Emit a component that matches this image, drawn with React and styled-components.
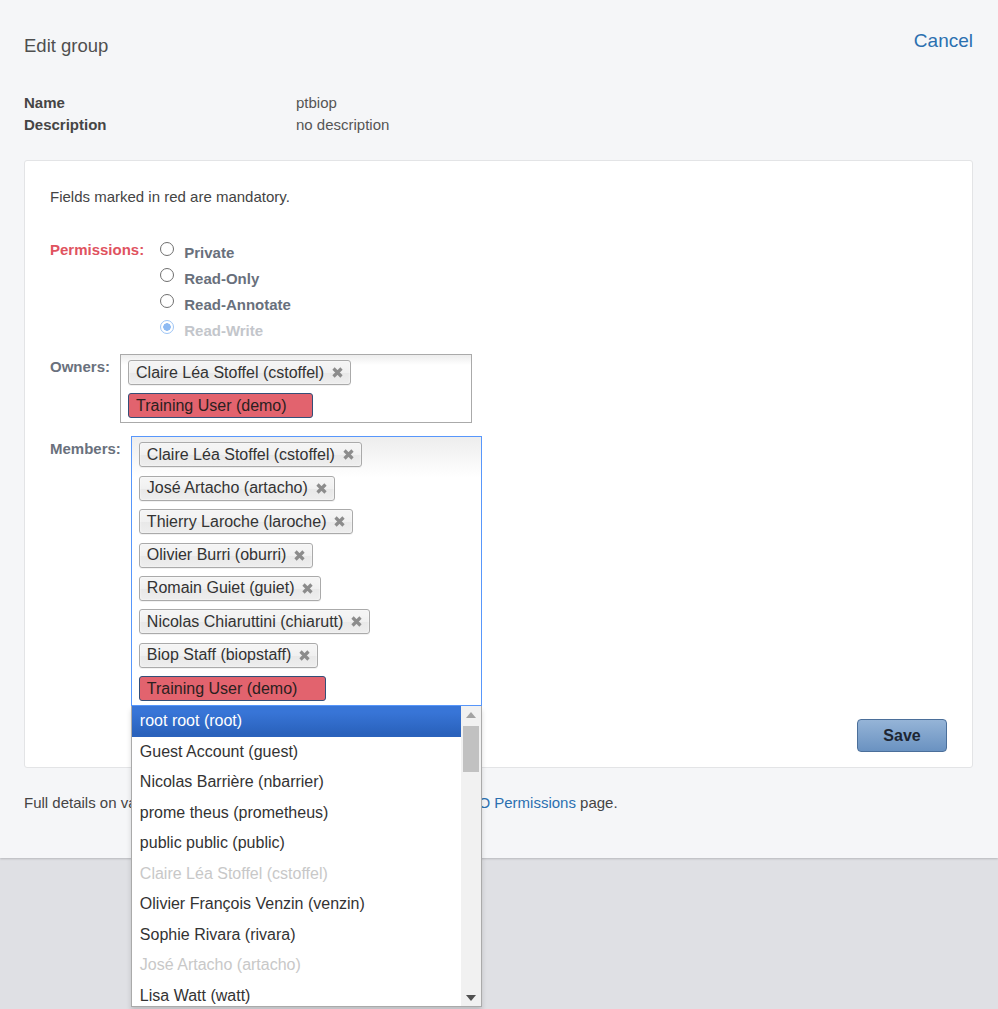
import React from "react";
import styled, { createGlobalStyle } from "styled-components";

const GlobalStyle = createGlobalStyle`
  html, body {
    margin: 0;
    padding: 0;
    background: #dfe0e4;
    font-family: "Liberation Sans", Arial, sans-serif;
    color: #333;
  }
`;

const Page = styled.div`
  min-height: 100vh;
  background: #dfe0e4;
`;

const Top = styled.div`
  background: #f5f6f8;
  padding: 29px 25px 45px 24px;
  box-shadow: 0 1px 2px rgba(0, 0, 0, 0.18);
`;

const Header = styled.div`
  display: flex;
  justify-content: space-between;
  align-items: flex-start;
`;

const Title = styled.h1`
  margin: 0;
  padding-top: 5px;
  font-size: 18.5px;
  line-height: 24px;
  font-weight: normal;
  color: #4f4f4f;
`;

const CancelLink = styled.a`
  font-size: 19px;
  line-height: 24px;
  color: #2b70b0;
  text-decoration: none;
  cursor: pointer;
`;

const Info = styled.dl`
  display: grid;
  grid-template-columns: 272px 1fr;
  margin: 34px 0 0;
  font-size: 15px;
  line-height: 22px;
`;

const InfoKey = styled.dt`
  font-weight: bold;
  color: #454545;
`;

const InfoValue = styled.dd`
  margin: 0;
  color: #555;
`;

const Card = styled.div`
  margin-top: 24px;
  background: #fff;
  border: 1px solid #e3e4e6;
  border-radius: 3px;
  padding: 26px 25px 15px 25px;
  display: flex;
  flex-direction: column;
`;

const Note = styled.p`
  margin: 0;
  font-size: 15px;
  line-height: 20px;
  color: #444;
`;

const FieldRow = styled.div`
  display: flex;
  align-items: flex-start;
  gap: 10px;
  margin-top: ${({ $top }) => $top}px;
`;

const FieldLabel = styled.label`
  font-size: 15px;
  line-height: 20px;
  font-weight: bold;
  color: ${({ $required }) => ($required ? "#e0535f" : "#6a717d")};
  padding-top: ${({ $pad }) => $pad || 0}px;
`;

const RadioList = styled.div`
  display: flex;
  flex-direction: column;
`;

const RadioOption = styled.label`
  display: flex;
  align-items: center;
  height: 26px;
  &:first-child { margin-top: -1px; }
  font-size: 15px;
  font-weight: bold;
  color: ${({ $disabled }) => ($disabled ? "#c3c6cb" : "#69707c")};
`;

const Radio = styled.input.attrs({ type: "radio" })`
  appearance: none;
  margin: -6px 10px 0 6px;
  width: 14px;
  height: 14px;
  border-radius: 50%;
  border: 1px solid #6f6f6f;
  background: #fff;
  box-sizing: border-box;
  &:checked {
    border-color: #9ec5f5;
    background: radial-gradient(circle, #8dbaf3 0 3.5px, #fff 4px);
  }
`;

const ChoiceBox = styled.div`
  position: relative;
  box-sizing: border-box;
  width: ${({ $w }) => $w}px;
  border: 1px solid ${({ $focus }) => ($focus ? "#5897fb" : "#aaa")};
  background: linear-gradient(to bottom, #eee 1%, #fff 15%);
  padding: 5px 7px 4px 7px;
  display: flex;
  flex-wrap: wrap;
  row-gap: 8.4px;
  column-gap: 5px;
`;

const Tag = styled.div`
  box-sizing: border-box;
  height: 25px;
  display: inline-flex;
  align-items: center;
  gap: 7px;
  padding: 0 6px 0 7px;
  border: 1px solid #aaa;
  border-radius: 3px;
  background: linear-gradient(to bottom, #f4f4f4 20%, #f0f0f0 50%, #e8e8e8 52%, #eee 100%);
  box-shadow: 0 0 2px #fff inset, 0 1px 0 rgba(0, 0, 0, 0.05);
  font-size: 16px;
  color: #333;
  white-space: nowrap;
`;

const SearchField = styled.div`
  box-sizing: border-box;
  height: 25px;
  width: ${({ $w }) => $w}px;
  display: flex;
  align-items: center;
  padding: 0 7px;
  border: 1px solid #334f78;
  border-radius: 3px;
  background: #e2636e;
  font-size: 16px;
  color: #2a2020;
  white-space: nowrap;
`;

const Close = () => (
  <svg width="13" height="13" viewBox="0 0 13 13">
    <path d="M2.5 2.5 L10.5 10.5 M10.5 2.5 L2.5 10.5" stroke="#8c8c8c" strokeWidth="3.2" strokeLinecap="butt" />
  </svg>
);

const Dropdown = styled.div`
  position: absolute;
  top: calc(100% + 1px);
  left: -1px;
  right: -1px;
  display: flex;
  background: #fff;
  border: 1px solid #aaa;
  border-top: 0;
  box-shadow: 0 4px 5px rgba(0, 0, 0, 0.15);
  z-index: 10;
`;

const Results = styled.ul`
  flex: 1;
  list-style: none;
  margin: 0;
  padding: 0;
  height: 300px;
  overflow: hidden;
`;

const Result = styled.li`
  padding: 5px 8px;
  line-height: 20.5px;
  font-size: 16px;
  white-space: nowrap;
  color: ${({ $active, $disabled }) => ($active ? "#fff" : $disabled ? "#c8c8c8" : "#333")};
  background: ${({ $active }) =>
    $active ? "linear-gradient(to bottom, #3875d7 20%, #2a62bc 90%)" : "transparent"};
`;

const ScrollTrack = styled.div`
  width: 20px;
  background: #f1f1f1;
  display: flex;
  flex-direction: column;
  align-items: center;
`;

const ScrollButton = styled.div`
  height: 17px;
  display: flex;
  align-items: center;
  justify-content: center;
`;

const Thumb = styled.div`
  margin-top: 3px;
  width: 16px;
  height: 46px;
  background: #c1c1c1;
`;

const Spacer = styled.div`
  flex: 1;
`;

const Arrow = ({ down, color }) => (
  <svg width="10" height="6" viewBox="0 0 10 6">
    <path d={down ? "M0 0 H10 L5 6 Z" : "M0 6 H10 L5 0 Z"} fill={color} />
  </svg>
);

const SaveRow = styled.div`
  display: flex;
  justify-content: flex-end;
  margin-top: 13px;
`;

const SaveButton = styled.button`
  width: 90px;
  height: 33px;
  border: 1px solid #4b6f9a;
  border-radius: 4px;
  background: linear-gradient(to bottom, #95b4d7, #6a92c1);
  font-family: "Liberation Sans", Arial, sans-serif;
  font-size: 16px;
  font-weight: bold;
  color: #1d2633;
  cursor: pointer;
`;

const Footer = styled.p`
  margin: 25px 0 0;
  font-size: 15px;
  line-height: 20px;
  color: #444;
`;

const FooterLink = styled.a`
  color: #2b70b0;
  text-decoration: none;
`;

const permissions = [
  { label: "Private" },
  { label: "Read-Only" },
  { label: "Read-Annotate" },
  { label: "Read-Write", checked: true, disabled: true },
];

const owners = ["Claire Léa Stoffel (cstoffel)"];

const members = [
  "Claire Léa Stoffel (cstoffel)",
  "José Artacho (artacho)",
  "Thierry Laroche (laroche)",
  "Olivier Burri (oburri)",
  "Romain Guiet (guiet)",
  "Nicolas Chiaruttini (chiarutt)",
  "Biop Staff (biopstaff)",
];

const results = [
  { name: "root root (root)", active: true },
  { name: "Guest Account (guest)" },
  { name: "Nicolas Barrière (nbarrier)" },
  { name: "prome theus (prometheus)" },
  { name: "public public (public)" },
  { name: "Claire Léa Stoffel (cstoffel)", disabled: true },
  { name: "Olivier François Venzin (venzin)" },
  { name: "Sophie Rivara (rivara)" },
  { name: "José Artacho (artacho)", disabled: true },
  { name: "Lisa Watt (watt)" },
];

export default function App() {
  return (
    <Page>
      <GlobalStyle />
      <Top>
        <Header>
          <Title>Edit group</Title>
          <CancelLink>Cancel</CancelLink>
        </Header>

        <Info>
          <InfoKey>Name</InfoKey>
          <InfoValue>ptbiop</InfoValue>
          <InfoKey>Description</InfoKey>
          <InfoValue>no description</InfoValue>
        </Info>

        <Card>
          <Note>Fields marked in red are mandatory.</Note>

          <FieldRow $top={33}>
            <FieldLabel $required>Permissions:</FieldLabel>
            <RadioList>
              {permissions.map((p) => (
                <RadioOption key={p.label} $disabled={p.disabled}>
                  <Radio name="perm" defaultChecked={p.checked} disabled={p.disabled} />
                  {p.label}
                </RadioOption>
              ))}
            </RadioList>
          </FieldRow>

          <FieldRow $top={11}>
            <FieldLabel $pad={3}>Owners:</FieldLabel>
            <ChoiceBox $w={352}>
              {owners.map((o) => (
                <Tag key={o}>
                  {o}
                  <Close />
                </Tag>
              ))}
              <SearchField $w={185}>Training User (demo)</SearchField>
            </ChoiceBox>
          </FieldRow>

          <FieldRow $top={13}>
            <FieldLabel $pad={3}>Members:</FieldLabel>
            <ChoiceBox $w={351} $focus>
              {members.map((m) => (
                <Tag key={m}>
                  {m}
                  <Close />
                </Tag>
              ))}
              <SearchField $w={187}>Training User (demo)</SearchField>

              <Dropdown>
                <Results>
                  {results.map((r) => (
                    <Result key={r.name} $active={r.active} $disabled={r.disabled}>
                      {r.name}
                    </Result>
                  ))}
                </Results>
                <ScrollTrack>
                  <ScrollButton>
                    <Arrow color="#a3a3a3" />
                  </ScrollButton>
                  <Thumb />
                  <Spacer />
                  <ScrollButton>
                    <Arrow down color="#505050" />
                  </ScrollButton>
                </ScrollTrack>
              </Dropdown>
            </ChoiceBox>
          </FieldRow>

          <SaveRow>
            <SaveButton>Save</SaveButton>
          </SaveRow>
        </Card>

        <Footer>
          Full details on various permission levels may be found on the{" "}
          <FooterLink>OMERO Permissions</FooterLink> page.
        </Footer>
      </Top>
    </Page>
  );
}
